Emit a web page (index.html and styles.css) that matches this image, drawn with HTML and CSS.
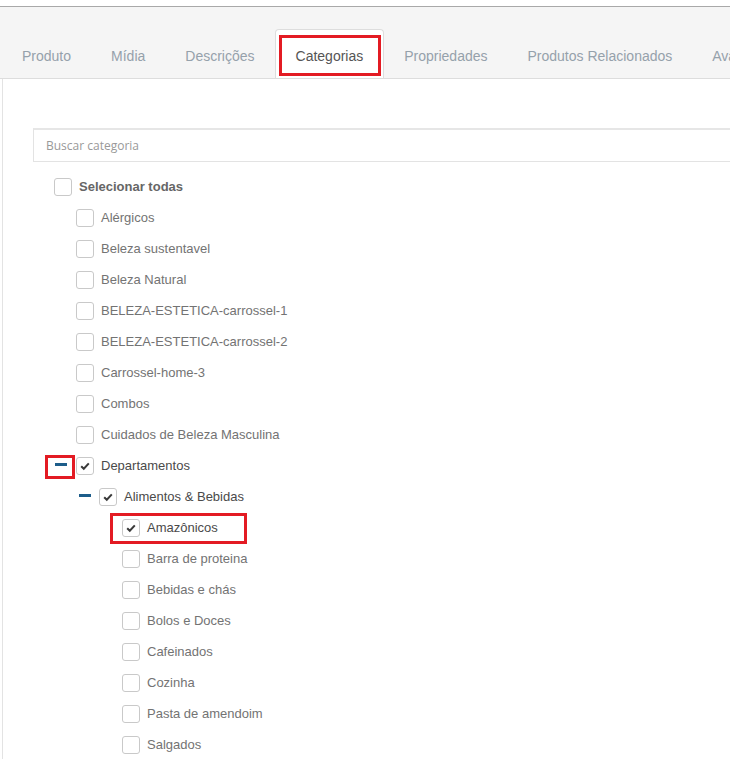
FILE: index.html
```html
<!DOCTYPE html>
<html lang="pt">
<head>
<meta charset="utf-8">
<link rel="stylesheet" href="styles.css">
</head>
<body>
<div class="topstrip"></div>
<div class="tabbar">
  <ul class="tabs">
    <li class="tab">Produto</li>
    <li class="tab">Mídia</li>
    <li class="tab">Descrições</li>
    <li class="tab active"><span class="tab-hl"></span>Categorias</li>
    <li class="tab">Propriedades</li>
    <li class="tab">Produtos Relacionados</li>
    <li class="tab">Avaliações</li>
  </ul>
</div>
<div class="panel">
  <div class="search">Buscar categoria</div>
  <ul class="tree root">
    <li><div class="row"><span class="cb"></span><span class="label bold">Selecionar todas</span></div>
      <ul class="tree">
        <li><div class="row"><span class="cb"></span><span class="label">Alérgicos</span></div></li>
        <li><div class="row"><span class="cb"></span><span class="label">Beleza sustentavel</span></div></li>
        <li><div class="row"><span class="cb"></span><span class="label">Beleza Natural</span></div></li>
        <li><div class="row"><span class="cb"></span><span class="label">BELEZA-ESTETICA-carrossel-1</span></div></li>
        <li><div class="row"><span class="cb"></span><span class="label">BELEZA-ESTETICA-carrossel-2</span></div></li>
        <li><div class="row"><span class="cb"></span><span class="label">Carrossel-home-3</span></div></li>
        <li><div class="row"><span class="cb"></span><span class="label">Combos</span></div></li>
        <li><div class="row"><span class="cb"></span><span class="label">Cuidados de Beleza Masculina</span></div></li>
        <li><div class="row"><span class="exp exp-hl"><span class="minus"></span></span><span class="cb checked"><svg viewBox="0 0 18 18" width="18" height="18"><path d="M5.2 9.2 L7.8 11.8 L12.8 6.4" fill="none" stroke="#3a3a3a" stroke-width="2"/></svg></span><span class="label on">Departamentos</span></div>
          <ul class="tree lvl2">
            <li><div class="row"><span class="exp exp2"><span class="minus"></span></span><span class="cb checked"><svg viewBox="0 0 18 18" width="18" height="18"><path d="M5.2 9.2 L7.8 11.8 L12.8 6.4" fill="none" stroke="#3a3a3a" stroke-width="2"/></svg></span><span class="label on">Alimentos &amp; Bebidas</span></div>
              <ul class="tree sub">
                <li><div class="row"><span class="sel-hl"><span class="cb checked"><svg viewBox="0 0 18 18" width="18" height="18"><path d="M5.2 9.2 L7.8 11.8 L12.8 6.4" fill="none" stroke="#3a3a3a" stroke-width="2"/></svg></span><span class="label on">Amazônicos</span></span></div></li>
                <li><div class="row"><span class="cb"></span><span class="label">Barra de proteina</span></div></li>
                <li><div class="row"><span class="cb"></span><span class="label">Bebidas e chás</span></div></li>
                <li><div class="row"><span class="cb"></span><span class="label">Bolos e Doces</span></div></li>
                <li><div class="row"><span class="cb"></span><span class="label">Cafeinados</span></div></li>
                <li><div class="row"><span class="cb"></span><span class="label">Cozinha</span></div></li>
                <li><div class="row"><span class="cb"></span><span class="label">Pasta de amendoim</span></div></li>
                <li><div class="row"><span class="cb"></span><span class="label">Salgados</span></div></li>
              </ul>
            </li>
          </ul>
        </li>
      </ul>
    </li>
  </ul>
</div>
</body>
</html>
```
FILE: styles.css
```css
html, body {
  margin: 0;
  padding: 0;
  background: #ffffff;
  overflow: hidden;
  font-family: "Liberation Sans", Arial, sans-serif;
}
.topstrip {
  height: 6px;
  background: #ffffff;
  border-bottom: 1px solid #a9a9a9;
}
.tabbar {
  background: #f5f5f5;
  height: 72px;
  border-bottom: 1px solid #dddddd;
  box-sizing: border-box;
  padding: 23px 0 0 2px;
  display: flex;
  align-items: flex-end;
  overflow: hidden;
}
.tabs {
  list-style: none;
  margin: 0 0 -1px 0;
  padding: 0;
  display: flex;
  white-space: nowrap;
}
.tab {
  position: relative;
  font-size: 14px;
  line-height: 16px;
  color: #95a1ab;
  padding: 18px 19px 14px 19px;
  border: 1px solid transparent;
  border-bottom: none;
  border-radius: 4px 4px 0 0;
}
.tab.active {
  background: #ffffff;
  color: #555555;
  border-color: #dddddd;
  padding: 18px 20px 15px 20px;
}
.tab-hl {
  position: absolute;
  left: 3px;
  right: 2px;
  top: 5px;
  bottom: 3px;
  border: 3px solid #e31b23;
}
.panel {
  margin-left: 2px;
  border-left: 1px solid #e3e3e3;
  padding: 49px 0 0 30px;
  height: 631px;
  overflow: hidden;
}
.search {
  height: 34px;
  box-sizing: border-box;
  border: 1px solid #e3e3e3;
  border-top: 2px solid #e6e6e6;
  border-right: none;
  padding: 0 12px;
  display: flex;
  align-items: center;
  font-family: "Open Sans", "Liberation Sans", sans-serif;
  font-size: 12px;
  color: #999999;
}
.tree {
  list-style: none;
  margin: 0;
  padding: 0 0 0 22px;
}
.tree.root {
  padding-left: 21px;
  margin-top: 9px;
}
.tree.lvl2 {
  padding-left: 23px;
}
.tree.sub {
  padding-left: 23px;
}
.row {
  height: 31px;
  display: flex;
  align-items: center;
}
.cb {
  width: 18px;
  height: 18px;
  box-sizing: border-box;
  border: 1px solid #c9c9c9;
  border-radius: 3px;
  background: #ffffff;
  flex: none;
  position: relative;
}
.cb svg {
  position: absolute;
  left: -1px;
  top: -1px;
}
.label {
  margin-left: 7px;
  font-size: 13px;
  color: #737373;
}
.label.bold {
  font-weight: bold;
  color: #666666;
}
.label.on {
  color: #4a4a4a;
}
.exp {
  width: 22px;
  margin-left: -22px;
  height: 31px;
  display: flex;
  align-items: center;
  position: relative;
  flex: none;
}
.exp2 {
  margin-left: -20px;
  width: 20px;
}
.minus {
  display: block;
  width: 12px;
  height: 3px;
  background: #1d5d8a;
  margin-left: 1px;
  margin-top: -2px;
}
.exp2 .minus {
  margin-left: 0;
}
.exp-hl::after {
  content: "";
  position: absolute;
  left: -9px;
  top: 5px;
  width: 30px;
  height: 24px;
  box-sizing: border-box;
  border: 3px solid #e31b23;
}
.sel-hl {
  display: flex;
  align-items: center;
  position: relative;
}
.sel-hl::after {
  content: "";
  position: absolute;
  left: -12px;
  right: -29px;
  top: -6px;
  height: 31px;
  box-sizing: border-box;
  border: 3px solid #e31b23;
}
```
